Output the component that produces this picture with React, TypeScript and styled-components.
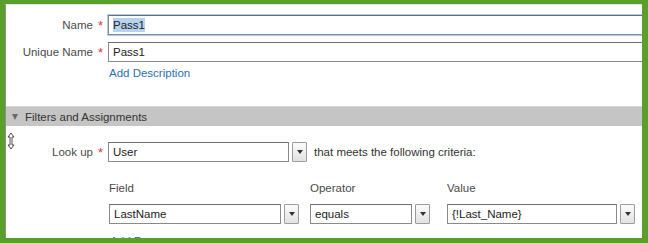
import React from 'react';
import styled, { createGlobalStyle } from 'styled-components';

const GlobalStyle = createGlobalStyle`
    html, body {
        margin: 0;
        padding: 0;
        background: #ffffff;
    }
    body {
        font-family: "Liberation Sans", Arial, Helvetica, sans-serif;
        font-size: 11.5px;
        color: #333333;
    }
`;

const Frame = styled.div`
    position: relative;
    width: 648px;
    height: 243px;
    box-sizing: border-box;
    border-style: solid;
    border-color: #59a02a;
    border-width: 4px 6px 5px 5px;
    overflow: hidden;
`;

const Panel = styled.div`
    height: 100%;
    box-sizing: border-box;
    background: #ffffff;
    border-left: 1px solid #8e8e8e;
    border-top: 1px solid #e4e4e4;
    overflow: hidden;
`;

const Section = styled.div`
    padding-top: 10px;
`;

const FieldRow = styled.div<{ $gap?: number }>`
    display: flex;
    align-items: center;
    height: 20px;
    margin-top: ${p => p.$gap ?? 0}px;
`;

const Label = styled.span`
    flex: none;
    width: 87px;
    text-align: right;
    color: #4a4a4a;
    white-space: nowrap;
`;

const Required = styled.span`
    flex: none;
    width: 15px;
    text-align: center;
    color: #d33;
    font-size: 13px;
    line-height: 1;
    padding-top: 1px;
`;

const TextBox = styled.div<{ $width: number; $focused?: boolean }>`
    flex: none;
    width: ${p => p.$width}px;
    height: 20px;
    box-sizing: border-box;
    border: 1px solid #8a8a8a;
    border-top-color: #6e6e6e;
    background: #ffffff;
    padding-left: 4px;
    display: flex;
    align-items: center;
    color: #222222;
    white-space: nowrap;
    overflow: hidden;
    ${p => p.$focused && `box-shadow: 0 0 0 1px #a9cdf2;`}
`;

const Selected = styled.span`
    background: #b7d2f1;
    padding: 1px 0;
`;

const Link = styled.a`
    display: block;
    color: #2c6fb7;
    text-decoration: none;
    line-height: 14px;
`;

const DescLink = styled(Link)`
    margin: 4px 0 0 103px;
`;

const SectionHeader = styled.div`
    margin-top: 26px;
    height: 19px;
    background: #c5c5c5;
    border-top: 1px solid #d6d6d6;
    display: flex;
    align-items: center;
    padding-left: 6px;
    color: #333333;
    gap: 7px;
`;

const Twisty = styled.span`
    width: 0;
    height: 0;
    border-left: 3.5px solid transparent;
    border-right: 3.5px solid transparent;
    border-top: 6px solid #6a6a6a;
    margin-top: 1px;
`;

const LookupRow = styled(FieldRow)`
    margin-top: 16px;
`;

const Picker = styled.div`
    display: flex;
    align-items: center;
    gap: 3px;
`;

const DropButton = styled.div`
    flex: none;
    width: 15px;
    height: 20px;
    box-sizing: border-box;
    border: 1px solid #9c9c9c;
    border-radius: 1px;
    background: linear-gradient(#fbfbfb, #e2e2e2);
    display: flex;
    align-items: center;
    justify-content: center;

    &::after {
        content: '';
        width: 0;
        height: 0;
        border-left: 3px solid transparent;
        border-right: 3px solid transparent;
        border-top: 4px solid #333333;
    }
`;

const Hint = styled.span`
    margin-left: 7px;
    color: #333333;
    white-space: nowrap;
`;

const CriteriaGrid = styled.div`
    display: grid;
    grid-template-columns: 201px 137px 200px;
    margin: 19px 0 0 103px;
    row-gap: 9px;
`;

const ColumnTitle = styled.div`
    color: #4a4a4a;
    line-height: 14px;
`;

const RowLink = styled(Link)`
    margin: 10px 0 0 104px;
`;

const Cursor = styled.svg`
    position: absolute;
    left: 2px;
    top: 128px;
`;

const App: React.FC = () => {
    return (
        <>
            <GlobalStyle />
            <Frame>
                <Panel>
                    <Section>
                        <FieldRow>
                            <Label>Name</Label>
                            <Required>*</Required>
                            <TextBox $width={560} $focused><Selected>Pass1</Selected></TextBox>
                        </FieldRow>
                        <FieldRow $gap={7}>
                            <Label>Unique Name</Label>
                            <Required>*</Required>
                            <TextBox $width={560}>Pass1</TextBox>
                        </FieldRow>
                        <DescLink>Add Description</DescLink>
                    </Section>
                    <SectionHeader>
                        <Twisty />
                        Filters and Assignments
                    </SectionHeader>
                    <LookupRow>
                        <Label>Look up</Label>
                        <Required>*</Required>
                        <Picker>
                            <TextBox $width={181}>User</TextBox>
                            <DropButton />
                        </Picker>
                        <Hint>that meets the following criteria:</Hint>
                    </LookupRow>
                    <CriteriaGrid>
                        <ColumnTitle>Field</ColumnTitle>
                        <ColumnTitle>Operator</ColumnTitle>
                        <ColumnTitle>Value</ColumnTitle>
                        <Picker>
                            <TextBox $width={172}>LastName</TextBox>
                            <DropButton />
                        </Picker>
                        <Picker>
                            <TextBox $width={102}>equals</TextBox>
                            <DropButton />
                        </Picker>
                        <Picker>
                            <TextBox $width={170}>{'{!Last_Name}'}</TextBox>
                            <DropButton />
                        </Picker>
                    </CriteriaGrid>
                    <RowLink>Add Row</RowLink>
                </Panel>
                <Cursor width="8" height="18" viewBox="0 0 8 18">
                    <path d="M4 1 L7 5 H5 V13 H7 L4 17 L1 13 H3 V5 H1 Z" fill="#ffffff" stroke="#222" strokeWidth="0.8" />
                </Cursor>
            </Frame>
        </>
    );
};

export default App;
